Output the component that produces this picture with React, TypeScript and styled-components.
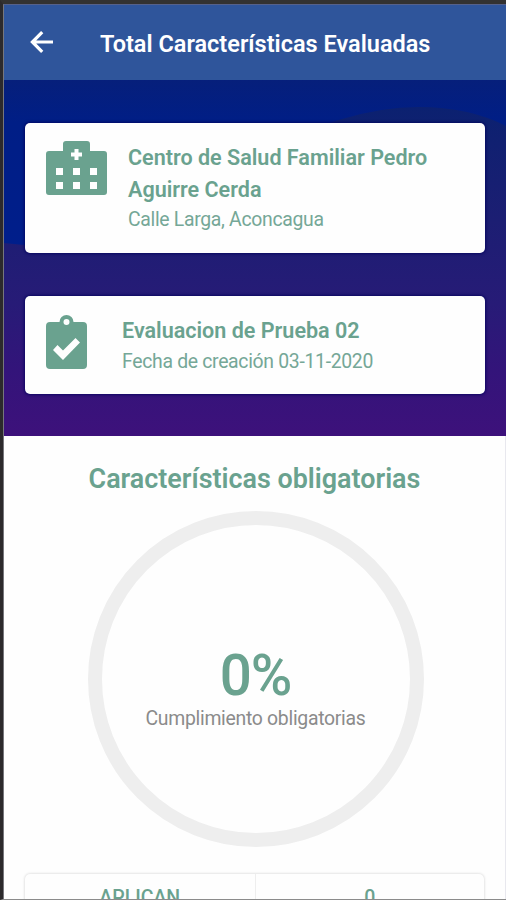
import React from 'react';
import styled, { createGlobalStyle } from 'styled-components';

const GREEN = '#6aa28f';

const GlobalStyle = createGlobalStyle`
  * { box-sizing: border-box; }
  html, body { margin: 0; padding: 0; height: 100%; overflow: hidden; background: #fff; }
  body { font-family: Roboto, "Liberation Sans", sans-serif; }
`;

const Frame = styled.div`
  width: 506px;
  height: 900px;
  overflow: hidden;
  display: flex;
  flex-direction: column;
  background: #fefefe;
  border-top: 4px solid #333231;
  border-left: 3px solid #2c2a2c;
  border-bottom: 1px solid #8b8b8b;
`;

const Screen = styled.div`
  flex: 1;
  min-height: 0;
  display: flex;
  flex-direction: column;
  border-top: 1px solid #56618a;
  border-left: 1px solid #77777c;
`;

const Header = styled.header`
  flex: none;
  height: 75px;
  display: flex;
  align-items: center;
  padding: 2px 0 0 25px;
  background: #2f559b;
  color: #fff;
`;

const BackButton = styled.button`
  display: flex;
  width: 26px;
  height: 26px;
  padding: 0;
  margin: -3px 45px 0 0;
  border: 0;
  background: none;
  color: #fff;
`;

const Title = styled.h1`
  margin: 0;
  padding-top: 1px;
  font-size: 23.5px;
  line-height: 30px;
  font-weight: 600;
  white-space: nowrap;
`;

const Hero = styled.section`
  flex: none;
  position: relative;
  height: 356px;
  padding: 43px 21px 0;
  display: flex;
  flex-direction: column;
  gap: 43px;
  background: #001e86;
`;

const HeroArt = styled.svg`
  position: absolute;
  inset: 0;
  width: 100%;
  height: 100%;
`;

const Card = styled.article<{ $height: number; $gap: number }>`
  position: relative;
  flex: none;
  height: ${p => p.$height}px;
  display: flex;
  align-items: flex-start;
  gap: ${p => p.$gap}px;
  padding: 18px 21px;
  border-radius: 5px;
  background: #fefefe;
  color: ${GREEN};
  box-shadow: 0 0 3px 1px rgba(0, 0, 90, 0.75);
`;

const CardIcon = styled.svg`
  flex: none;
  display: block;
  fill: ${GREEN};
`;

const CardText = styled.div`
  flex: 1;
  padding-top: 1px;
  white-space: nowrap;
`;

const CardTitle = styled.h2`
  margin: 0;
  font-size: 21.55px;
  line-height: 32px;
  font-weight: 600;
`;

const CardDetail = styled.p<{ $offset?: number }>`
  margin: ${p => p.$offset ?? 0}px 0 0;
  font-size: 19.4px;
  line-height: 28px;
  letter-spacing: -0.31px;
  color: #75a797;
`;

const Results = styled.main`
  flex: 1;
  min-height: 0;
  padding: 26px 21px 0;
  display: flex;
  flex-direction: column;
  align-items: center;
  border-right: 1px solid #e8e8ee;
`;

const SectionTitle = styled.h2`
  margin: 0;
  font-size: 26.9px;
  line-height: 34px;
  font-weight: 600;
  color: ${GREEN};
`;

const Ring = styled.div`
  flex: none;
  width: 336px;
  height: 336px;
  margin: 15px 0 0 2px;
  padding-top: 122px;
  border: 14px solid #eee;
  border-radius: 50%;
  text-align: center;
`;

const Percent = styled.div`
  font-size: 56.5px;
  line-height: 58px;
  font-weight: 500;
  letter-spacing: -1px;
  color: ${GREEN};
`;

const Caption = styled.div`
  font-size: 19.4px;
  line-height: 28px;
  letter-spacing: -0.29px;
  color: #8b8b8b;
`;

const Totals = styled.div`
  flex: none;
  align-self: stretch;
  height: 80px;
  margin-top: 27px;
  display: grid;
  grid-template-columns: 1fr 1fr;
  border-radius: 5px;
  background: #fefefe;
  box-shadow: 0 0 3px rgba(0, 0, 0, 0.2);
`;

const TotalCell = styled.div`
  padding-top: 10px;
  text-align: center;
  font-size: 19.5px;
  line-height: 28px;
  font-weight: 500;
  color: ${GREEN};

  & + & { border-left: 1px solid #eee; }
`;

export default function App() {
  return (
    <>
      <GlobalStyle />
      <Frame>
        <Screen>
          <Header>
            <BackButton aria-label="Volver">
              <svg width="26" height="26" viewBox="0 0 26 26" fill="none" stroke="currentColor" strokeWidth="3.2">
                <path d="M13.200 3.200 3.400 13l9.800 9.800M3.200 13h20.800" />
              </svg>
            </BackButton>
            <Title>Total Características Evaluadas</Title>
          </Header>
          <Hero>
            <HeroArt viewBox="0 0 502 356" preserveAspectRatio="none">
              <defs>
                <linearGradient id="sky" x1="0" y1="0" x2="0" y2="1">
                  <stop offset="0" stopColor="#061f7b" />
                  <stop offset="0.12" stopColor="#001e86" />
                  <stop offset="1" stopColor="#001e92" />
                </linearGradient>
                <linearGradient id="hill" gradientUnits="userSpaceOnUse" x1="0" y1="25" x2="0" y2="356">
                  <stop offset="0" stopColor="#0b2170" />
                  <stop offset="0.35" stopColor="#1c1e73" />
                  <stop offset="0.6" stopColor="#271b77" />
                  <stop offset="0.8" stopColor="#33147a" />
                  <stop offset="1" stopColor="#3d117b" />
                </linearGradient>
              </defs>
              <rect width="502" height="356" fill="url(#sky)" />
              <path d="M0 163Q120 178 230 90Q330 27 415 27Q465 27 502 46V356H0Z" fill="url(#hill)" />
            </HeroArt>
            <Card $height={130} $gap={21}>
              <CardIcon width="61" height="54" viewBox="0 0 61 54">
                <path
                  fillRule="evenodd"
                  d="M20 0H41Q44 0 44 3V10H58Q61 10 61 13V51Q61 54 58 54H3Q0 54 0 51V13Q0 10 3 10H17V3Q17 0 20 0ZM28.500 8V11.500H25V15.500H28.500V19H32.500V15.500H36V11.500H32.500V8ZM10 27V34H17V27ZM27 27V34H34V27ZM44 27V34H51V27ZM10 41V48H17V41ZM27 41V48H34V41ZM44 41V48H51V41Z"
                />
              </CardIcon>
              <CardText>
                <CardTitle>Centro de Salud Familiar Pedro<br />Aguirre Cerda</CardTitle>
                <CardDetail>Calle Larga, Aconcagua</CardDetail>
              </CardText>
            </Card>
            <Card $height={98} $gap={35}>
              <CardIcon width="41" height="56" viewBox="0 0 41 56">
                <path
                  fillRule="evenodd"
                  d="M4 8H13.500A7 7 0 0 1 27.500 8H37Q41 8 41 12V51Q41 55 37 55H4Q0 55 0 51V12Q0 8 4 8ZM20.500 5A3 3 0 1 0 20.500 11A3 3 0 1 0 20.500 5ZM7 36 17 46 34 28.500 29.500 24 17 36.500 11.500 31Z"
                />
              </CardIcon>
              <CardText>
                <CardTitle>Evaluacion de Prueba 02</CardTitle>
                <CardDetail $offset={1}>Fecha de creación 03-11-2020</CardDetail>
              </CardText>
            </Card>
          </Hero>
          <Results>
            <SectionTitle>Características obligatorias</SectionTitle>
            <Ring>
              <Percent>0%</Percent>
              <Caption>Cumplimiento obligatorias</Caption>
            </Ring>
            <Totals>
              <TotalCell>APLICAN</TotalCell>
              <TotalCell>0</TotalCell>
            </Totals>
          </Results>
        </Screen>
      </Frame>
    </>
  );
}
